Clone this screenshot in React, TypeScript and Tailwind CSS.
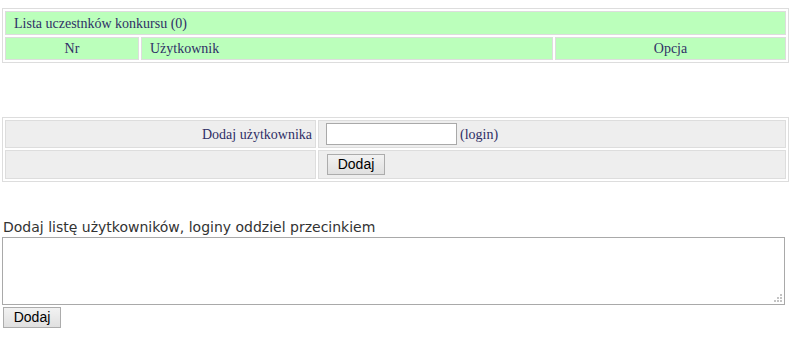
import React from "react";

const serif = { fontFamily: '"Liberation Serif", "Times New Roman", serif' };

function Grip() {
  const dots = [
    [6, 0],
    [3, 3],
    [6, 3],
    [0, 6],
    [3, 6],
    [6, 6],
  ];
  return (
    <svg width="8" height="8" className="absolute right-[3px] bottom-[3px]" viewBox="0 0 8 8">
      {dots.map(([x, y], i) => (
        <rect key={i} x={x} y={y} width="2" height="2" fill="#c4c4c4" />
      ))}
    </svg>
  );
}

function Btn({ className = "" }: { className?: string }) {
  return (
    <button
      className={
        "block h-[21px] w-[58px] border border-[#acacac] bg-gradient-to-b from-[#f2f2f2] to-[#e0e0e0] text-[14px] leading-[19px] text-black " +
        className
      }
      style={{ fontFamily: '"Liberation Sans", Arial, sans-serif' }}
    >
      Dodaj
    </button>
  );
}

export default function App() {
  return (
    <div className="min-h-[339px] w-[797px] bg-white text-[#2f2f66]" style={serif}>
      <div className="pt-[8px] pl-[2px]">
        <table className="w-[787px] border-separate border-spacing-[2px] border border-[#dddddd] text-[14px]">
          <tbody>
            <tr>
              <td colSpan={3} className="h-[24px] border border-[#dddddd] bg-[#bbffbb] p-0 pl-[8px] align-middle">
                Lista uczestnków konkursu (0)
              </td>
            </tr>
            <tr>
              <td className="h-[23px] w-[134px] border border-[#dddddd] bg-[#bbffbb] p-0 text-center">Nr</td>
              <td className="h-[23px] border border-[#dddddd] bg-[#bbffbb] p-0 pl-[8px]">Użytkownik</td>
              <td className="h-[23px] w-[231px] border border-[#dddddd] bg-[#bbffbb] p-0 text-center">Opcja</td>
            </tr>
          </tbody>
        </table>

        <table className="mt-[54px] w-[787px] border-separate border-spacing-[2px] border border-[#dddddd] text-[14px]">
          <tbody>
            <tr>
              <td className="h-[28px] w-[311px] border border-[#dddddd] bg-[#eeeeee] p-0 pr-[3px] text-right">
                Dodaj użytkownika
              </td>
              <td className="h-[28px] border border-[#dddddd] bg-[#eeeeee] p-0 pl-[7px]">
                <div className="flex items-center gap-[3px]">
                  <input
                    type="text"
                    className="h-[22px] w-[131px] border border-[#a9a9a9] bg-white px-[2px] text-[13px] outline-none"
                  />
                  <span>(login)</span>
                </div>
              </td>
            </tr>
            <tr>
              <td className="h-[29px] border border-[#dddddd] bg-[#eeeeee] p-0"></td>
              <td className="h-[29px] border border-[#dddddd] bg-[#eeeeee] p-0 pl-[8px]">
                <div className="flex items-center">
                  <Btn />
                </div>
              </td>
            </tr>
          </tbody>
        </table>
      </div>

      <div className="mt-[37px] flex flex-col pl-[2px]">
        <div
          className="pl-[1px] text-[14px] leading-[16px] text-[#333333]"
          style={{ fontFamily: '"DejaVu Sans", Verdana, sans-serif' }}
        >
          Dodaj listę użytkowników, loginy oddziel przecinkiem
        </div>
        <div className="relative mt-[2px] h-[68px] w-[783px]">
          <textarea className="block h-[68px] w-[783px] resize-none border border-[#a9a9a9] bg-white outline-none" />
          <Grip />
        </div>
        <div className="mt-[2px] pl-[1px]">
          <Btn />
        </div>
      </div>
    </div>
  );
}
